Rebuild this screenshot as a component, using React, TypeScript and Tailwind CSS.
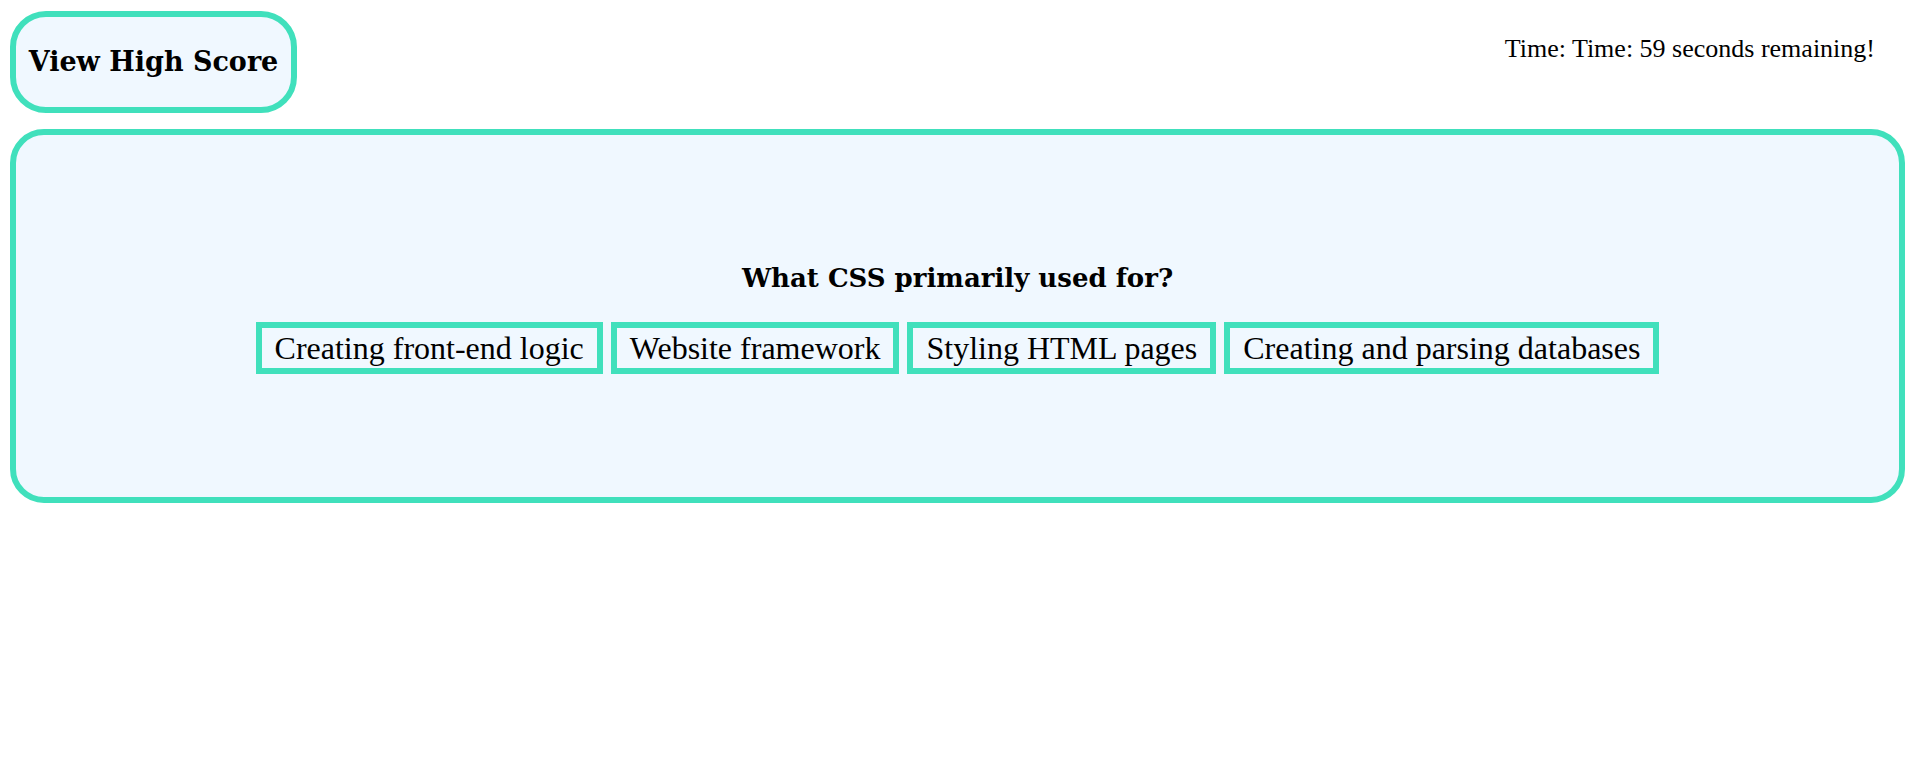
export default function App() {
  const answers = [
    'Creating front-end logic',
    'Website framework',
    'Styling HTML pages',
    'Creating and parsing databases',
  ]

  return (
    <div className="min-h-screen bg-white text-black">
      {/* Header */}
      <header className="flex items-start justify-between">
        <button className="ml-[10px] mt-[11px] h-[102px] w-[287px] rounded-[36px] border-[6px] border-[#40e0bc] bg-[#f0f8ff] font-['DejaVu_Serif',serif] text-[27px] font-bold">
          View High Score
        </button>
        <p className="mr-[40px] mt-[29px] font-['Liberation_Serif',serif] text-[26px]">
          Time: Time: 59 seconds remaining!
        </p>
      </header>

      {/* Quiz card */}
      <main className="mx-[10px] mt-[16px] flex h-[374px] flex-col justify-center rounded-[34px] border-[6px] border-[#40e0bc] bg-[#f0f8ff]">
        <h2 className="text-center font-['DejaVu_Serif',serif] text-[26px] font-bold">
          What CSS primarily used for?
        </h2>
        <div className="mt-[24px] flex justify-center gap-[8px]">
          {answers.map(a => (
            <button
              key={a}
              className="h-[52px] border-[6px] border-[#40e0bc] bg-[#f0f8ff] px-[13px] font-['Liberation_Serif',serif] text-[32px] leading-none"
            >
              {a}
            </button>
          ))}
        </div>
      </main>
    </div>
  )
}
